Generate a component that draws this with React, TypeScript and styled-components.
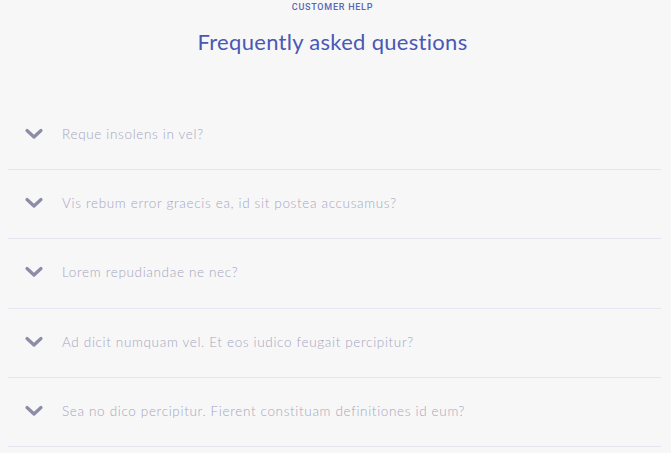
import styled, { createGlobalStyle } from "styled-components"

const GlobalStyle = createGlobalStyle`
    html, body {
        margin: 0;
        padding: 0;
        background: #f7f7f7;
    }
`

const Page = styled.section`
    display: flex;
    flex-direction: column;
    padding: 0 8px;
    font-family: Lato, "Noto Sans", sans-serif;
`

const Header = styled.header`
    display: flex;
    flex-direction: column;
    align-items: center;
    padding-right: 6px;
`

const Eyebrow = styled.span`
    margin-top: 2px;
    font-family: Roboto, "Liberation Sans", sans-serif;
    font-size: 9px;
    font-weight: 500;
    line-height: 10px;
    letter-spacing: 0.75px;
    color: #5866b6;
`

const Title = styled.h2`
    margin: 17px 0 0;
    font-size: 22px;
    font-weight: 400;
    line-height: 26px;
    letter-spacing: 0.3px;
    color: #4a58b4;
`

const List = styled.ul`
    list-style: none;
    margin: 45.75px 0 0;
    padding: 0;
`

const Item = styled.li`
    display: flex;
    align-items: center;
    gap: 18px;
    box-sizing: border-box;
    height: 69.25px;
    padding: 0 0 2px 16px;
    border-bottom: 1px solid #e6e6f2;
    margin-right: 2px;
`

const Chevron = styled.svg`
    width: 20px;
    height: 12px;
    flex: none;
`

const Question = styled.span`
    font-size: 13.5px;
    font-weight: 300;
    letter-spacing: 0.66px;
    color: #a6a6c0;
`

const questions = [
    "Reque insolens in vel?",
    "Vis rebum error graecis ea, id sit postea accusamus?",
    "Lorem repudiandae ne nec?",
    "Ad dicit numquam vel. Et eos iudico feugait percipitur?",
    "Sea no dico percipitur. Fierent constituam definitiones id eum?",
]

export default function App() {
    return (
        <>
            <GlobalStyle />
            <Page>
                <Header>
                    <Eyebrow>CUSTOMER HELP</Eyebrow>
                    <Title>Frequently asked questions</Title>
                </Header>
                <List>
                    {questions.map((q) => (
                        <Item key={q}>
                            <Chevron viewBox="0 0 20 12">
                                <path
                                    d="M3 2.5 L10 9 L17 2.5"
                                    fill="none"
                                    stroke="#8c8ca8"
                                    strokeWidth="3.2"
                                    strokeLinecap="round"
                                    strokeLinejoin="round"
                                />
                            </Chevron>
                            <Question>{q}</Question>
                        </Item>
                    ))}
                </List>
            </Page>
        </>
    )
}
